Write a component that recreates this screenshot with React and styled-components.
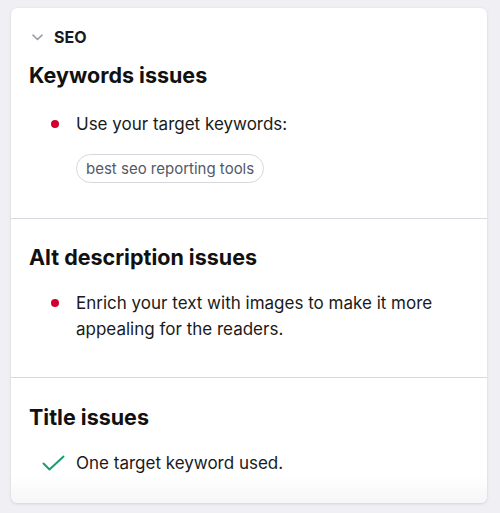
import React from "react";
import styled, { createGlobalStyle } from "styled-components";

const Global = createGlobalStyle`
  html, body { margin: 0; padding: 0; background: #f0f0f4; }
  body { font-family: Inter, "Noto Sans", Arial, sans-serif; color: #1a1a1a; -webkit-font-smoothing: antialiased; }
`;

const Page = styled.div`
  padding: 8px 13px 10px 11px;
  box-sizing: border-box;
  width: 500px;
  height: 513px;
`;

const Card = styled.div`
  position: relative;
  background: #fff;
  border-radius: 6px;
  box-shadow: 0 1px 3px rgba(25, 27, 35, 0.12), 0 0 1px rgba(25, 27, 35, 0.1);
  overflow: hidden;
  height: 495px;
  &::after {
    content: "";
    position: absolute;
    left: 0; right: 0; bottom: 0;
    height: 28px;
    background: linear-gradient(rgba(255,255,255,0), rgba(240,240,244,0.6));
    pointer-events: none;
  }
`;

const Header = styled.div`
  display: flex;
  align-items: center;
  gap: 11px;
  padding: 18px 18px 0 21px;
  height: 22px;
`;

const HeaderTitle = styled.span`
  font-size: 16px;
  font-weight: 700;
  line-height: 22px;
  color: #171a22;
`;

const Section = styled.section`
  padding: ${(p) => p.$pt}px 18px ${(p) => p.$pb}px 18px;
  border-top: ${(p) => (p.$divider ? "1px solid #d9dae0" : "none")};
`;

const Heading = styled.h2`
  margin: 0;
  font-size: 21.5px;
  font-weight: 700;
  line-height: 28px;
  color: #111;
`;

const List = styled.ul`
  list-style: none;
  margin: ${(p) => p.$mt}px 0 0;
  padding: 0;
`;

const Item = styled.li`
  display: flex;
  align-items: flex-start;
  font-size: 17px;
  line-height: 26px;
  color: #1a1a1a;
`;

const Marker = styled.span`
  flex: 0 0 auto;
  width: 47px;
  height: 26px;
  display: flex;
  align-items: center;
  justify-content: flex-end;
  padding-right: ${(p) => (p.$check ? 11 : 17)}px;
  box-sizing: border-box;
`;

const Dot = styled.span`
  width: 8px;
  height: 8px;
  border-radius: 50%;
  background: #d1002f;
`;

const Tag = styled.span`
  display: inline-flex;
  align-items: center;
  height: 27px;
  padding: 0 9px;
  border: 1px solid #d6d7dd;
  border-radius: 15px;
  font-size: 15px;
  color: #545867;
  margin: 17px 0 0 47px;
`;

const Chevron = () => (
  <svg width="11" height="7" viewBox="0 0 11 7" fill="none">
    <path d="M1 1.2 L5.5 5.5 L10 1.2" stroke="#9a9ca6" strokeWidth="1.6" strokeLinecap="round" strokeLinejoin="round" />
  </svg>
);

const Check = () => (
  <svg width="23" height="16" viewBox="0 0 23 16" fill="none">
    <path d="M1.5 8.5 L7.5 14.5 L21.5 1.5" stroke="#1a9b77" strokeWidth="2" strokeLinecap="round" strokeLinejoin="round" />
  </svg>
);

export default function App() {
  return (
    <>
      <Global />
      <Page>
        <Card>
          <Header>
            <Chevron />
            <HeaderTitle>SEO</HeaderTitle>
          </Header>
          <Section $pt={13} $pb={35}>
            <Heading>Keywords issues</Heading>
            <List $mt={22}>
              <Item>
                <Marker><Dot /></Marker>
                Use your target keywords:
              </Item>
            </List>
            <Tag>best seo reporting tools</Tag>
          </Section>
          <Section $divider $pt={24} $pb={35}>
            <Heading>Alt description issues</Heading>
            <List $mt={19}>
              <Item>
                <Marker><Dot /></Marker>
                <span>Enrich your text with images to make it more appealing for the readers.</span>
              </Item>
            </List>
          </Section>
          <Section $divider $pt={25} $pb={20}>
            <Heading>Title issues</Heading>
            <List $mt={19}>
              <Item>
                <Marker $check><Check /></Marker>
                One target keyword used.
              </Item>
            </List>
          </Section>
        </Card>
      </Page>
    </>
  );
}
